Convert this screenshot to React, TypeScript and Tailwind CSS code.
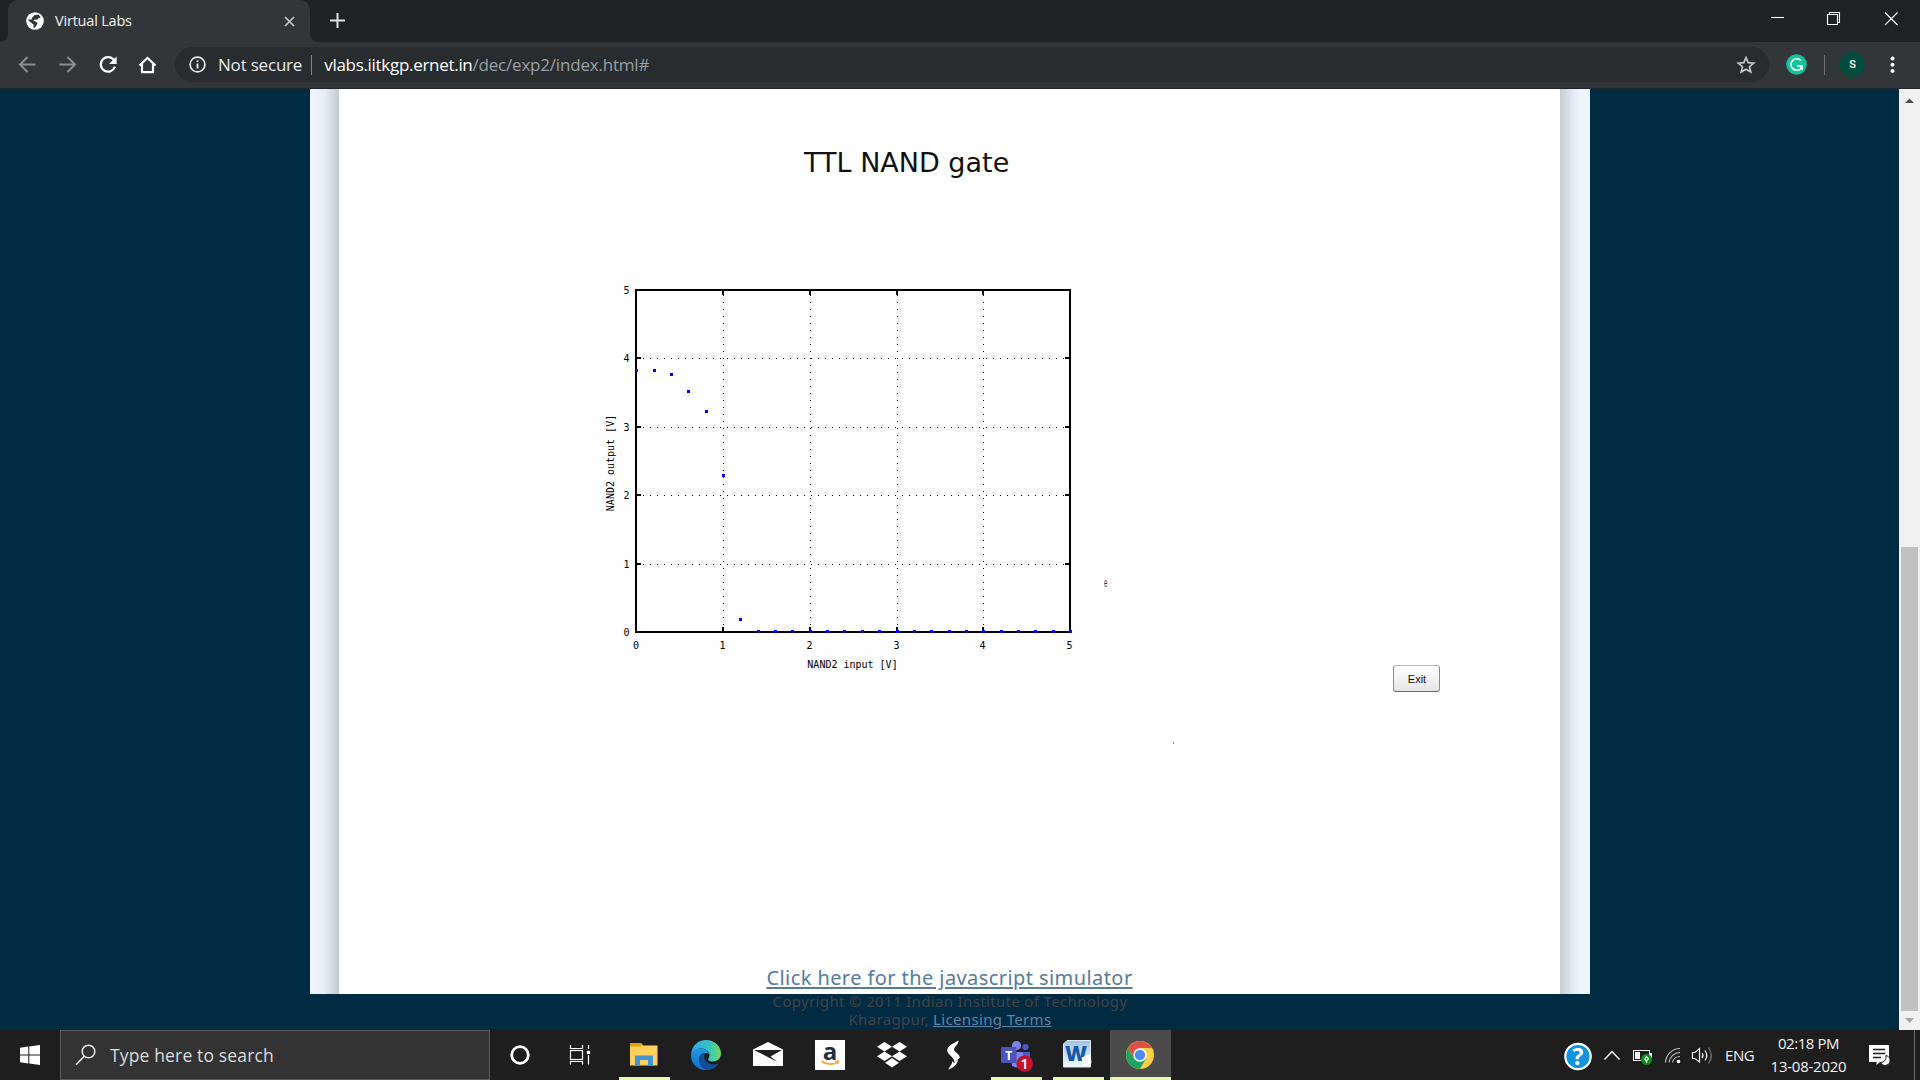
import React from "react";

const ui = "font-['Open_Sans','Noto_Sans',sans-serif]";

const gridX = [723, 810, 897, 983];
const gridY = [358, 427, 495, 564];
const points: [number, number][] = [
  [636, 370], [654, 370], [671, 374], [688, 391], [706, 411], [723, 475], [740, 619],
  [758, 631], [775, 631], [792, 631], [810, 631], [827, 631], [844, 631], [862, 631],
  [879, 631], [897, 631], [914, 631], [931, 631], [949, 631], [966, 631], [983, 631],
  [1001, 631], [1018, 631], [1035, 631], [1053, 631], [1070, 631],
];
const yLabels: [string, number][] = [["5", 294], ["4", 362], ["3", 431], ["2", 499], ["1", 568], ["0", 636]];
const xLabels: [string, number][] = [["0", 636], ["1", 722.5], ["2", 809.5], ["3", 896.5], ["4", 982.5], ["5", 1069.5]];

function Chart() {
  return (
    <svg className="shrink-0 bg-[#fefefe] font-['DejaVu_Sans_Mono',monospace]" width="514" height="404" viewBox="590 272 514 404" shapeRendering="crispEdges">
      {gridX.map((x) => (
        <g key={x}>
          <line x1={x + 0.5} x2={x + 0.5} y1="295" y2="631" stroke="#000" strokeDasharray="1 6" />
          <rect x={x - 1} y="291" width="2" height="4" />
          <rect x={x - 1} y="627" width="2" height="5" />
        </g>
      ))}
      {gridY.map((y) => (
        <g key={y}>
          <line x1="643" x2="1068" y1={y + 0.5} y2={y + 0.5} stroke="#000" strokeDasharray="1 6" />
          <rect x="637" y={y - 1} width="4" height="2" />
          <rect x="1065" y={y - 1} width="5" height="2" />
        </g>
      ))}
      <rect x="636" y="290" width="434" height="342" fill="none" stroke="#000" strokeWidth="2" />
      {points.map(([x, y]) => (
        <rect key={x} x={x - 1} y={y - 1} width="3" height="3" fill="#0000ff" />
      ))}
      <g fontSize="10" textAnchor="middle" shapeRendering="auto">
        {yLabels.map(([t, y]) => (
          <text key={t} x="626.5" y={y}>{t}</text>
        ))}
        {xLabels.map(([t, x]) => (
          <text key={t} x={x} y="649">{t}</text>
        ))}
        <text x="852.5" y="668">NAND2 input [V]</text>
        <text transform="translate(614 463) rotate(-90)">NAND2 output [V]</text>
      </g>
    </svg>
  );
}

function TabStrip() {
  return (
    <div className="flex h-[42px] items-end bg-[#202124]">
      <div className="flex w-2 items-end self-stretch bg-[#323639]">
        <div className="h-full w-2 rounded-br-lg bg-[#202124]" />
      </div>
      <div className="flex h-[42px] w-[302px] items-center bg-[#202124]">
        <div className="flex h-[42px] w-[302px] items-center rounded-t-[10px] bg-[#323639] pl-[18px]">
          <svg width="18" height="18" viewBox="0 0 18 18">
            <circle cx="9" cy="9" r="8.8" fill="#fff" />
            <path d="M8.2 3.2 12.6 2.6 14.8 5.4 12.4 6.2 11.2 7.8 8.6 7.6 7.4 9 9.6 9.6 11.6 11 10.4 13.4 8.8 15.8 7.4 15.6 7.6 12.8 5.6 11 2.4 8.6 2.6 7.2 5.4 7.8 6.2 5.4Z" fill="#323639" />
            <path d="M12.6 8.6 15.8 7.8 15.4 11.2 13.4 11.4Z" fill="#fff" />
          </svg>
          <span className="ml-[11px] text-[14.5px] leading-5 tracking-[-0.2px] text-[#f1f3f4]">Virtual Labs</span>
          <svg className="ml-auto mr-[15px]" width="11" height="11" viewBox="0 0 11 11">
            <path d="M1 1 10 10M10 1 1 10" stroke="#c4c7c9" strokeWidth="1.7" />
          </svg>
        </div>
      </div>
      <div className="flex w-2 self-stretch bg-[#323639]">
        <div className="h-full w-2 rounded-bl-lg bg-[#202124]" />
      </div>
      <svg className="mb-[14px] ml-[12px]" width="15" height="15" viewBox="0 0 15 15">
        <path d="M7.5 0V15M0 7.5H15" stroke="#dee1e6" strokeWidth="2" />
      </svg>
      <svg className="ml-auto self-start" width="160" height="40" viewBox="1760 0 160 40" fill="none" stroke="#fff" strokeWidth="1.1">
        <path d="M1771 17.5H1784" />
        <path d="M1827.5 14.5H1837.5V24.5H1827.5ZM1829.5 14V12.5H1839.5V22.5H1838" />
        <path d="M1885 12.5 1897.5 25M1897.5 12.5 1885 25" />
      </svg>
    </div>
  );
}

function Toolbar() {
  return (
    <div className="flex h-[47px] items-start border-b border-[#232628] bg-[#323639] pt-[5px]">
      <svg width="175" height="35" viewBox="0 47 175 35" fill="none" strokeWidth="2">
        <path d="M35.500 64.500H20.500M27.500 57 20 64.500 27.500 72" stroke="#8b8e91" />
        <path d="M59.500 64.500H74.500M67.500 57 75 64.500 67.500 72" stroke="#8b8e91" />
        <path d="M114.300 60.500A7.300 7.300 0 1 0 115 66.700" stroke="#fff" strokeWidth="2.200" />
        <path d="M116.600 56.500V64H109Z" fill="#fff" />
        <path d="M139.500 65.500 147.500 58 155.500 65.500M142 64V72.200H153V64" stroke="#fff" strokeWidth="2.200" />
      </svg>
      <div className="flex h-[35px] w-[1594px] items-center rounded-full bg-[#282c2f] pl-[14px] pr-[13px]">
        <svg width="17" height="17" viewBox="0 0 17 17" fill="none" stroke="#e8eaed">
          <circle cx="8.500" cy="8.500" r="7.400" strokeWidth="1.700" />
          <path d="M8.500 7.500V12.500M8.500 4.300V6" strokeWidth="1.900" />
        </svg>
        <span className="ml-[12px] text-[17px] leading-6 tracking-[-0.2px] text-[#e8eaed]">Not secure</span>
        <div className="ml-[9px] h-[20px] w-px bg-[#80868b]" />
        <span className="ml-[12px] text-[17px] leading-6 tracking-[-0.3px] text-white">vlabs.iitkgp.ernet.in</span>
        <span className="text-[17px] leading-6 tracking-[-0.2px] text-[#9aa0a6]">/dec/exp2/index.html#</span>
        <svg className="ml-auto" width="20" height="20" viewBox="0 0 20 20">
          <path d="M10 2.600 12.200 7.600 17.700 8.100 13.500 11.700 14.800 17 10 14.200 5.200 17 6.500 11.700 2.300 8.100 7.800 7.600Z" fill="none" stroke="#c4c7c9" strokeWidth="1.700" />
        </svg>
      </div>
      <svg width="151" height="35" viewBox="1769 47 151 35">
        <circle cx="1796.500" cy="64.500" r="10.300" fill="#15c39a" />
        <path d="M1801 60.500A5.800 5.800 0 1 0 1801 68.500L1801.500 66M1797 66H1802V70" fill="none" stroke="#fff" strokeWidth="1.500" />
        <rect x="1824" y="55" width="1" height="20" fill="#6b6f73" />
        <circle cx="1852.500" cy="64.500" r="12.500" fill="#004d40" />
        <text x="1852.500" y="68.300" textAnchor="middle" fontSize="11" fontWeight="500" fill="#fff" fontFamily="Roboto, sans-serif">S</text>
        <circle cx="1892.500" cy="58.500" r="2" fill="#fff" />
        <circle cx="1892.500" cy="64.800" r="2" fill="#fff" />
        <circle cx="1892.500" cy="71" r="2" fill="#fff" />
      </svg>
    </div>
  );
}

function Page() {
  return (
    <div className="flex h-[941px] bg-[#012a43] font-['Noto_Sans',sans-serif]">
      <div className="ml-[310px] flex w-[1280px] flex-col">
        <div className="flex h-[905px]">
          <div className="w-[29px] bg-linear-to-r from-[#eff6ff] from-0% via-[#e6eef6] via-50% to-[#c2cad0] to-100%" />
          <div className="flex w-[1221px] flex-col bg-white pt-[58px]">
            <h1 className="ml-[465px] self-start font-['DejaVu_Sans',sans-serif] text-[27px] leading-8 text-[#111]">TTL NAND gate</h1>
            <div className="mt-[93px] flex h-[420px] pl-[251px]">
              <Chart />
              <div className="mt-[305px] h-3 w-[3px] font-['Liberation_Sans',sans-serif] text-[12px] leading-3 text-[#333]">
                <span className="inline-block origin-left scale-x-[.5]">e</span>
              </div>
              <button className="mt-[393px] ml-[286px] h-[27px] w-[47px] rounded-[3px] border border-[#8a8a8a] border-t-[#b5b5b5] border-b-[#666] bg-linear-to-b from-white to-[#e6e6e6] pt-px pl-px font-['Liberation_Sans',sans-serif] text-[11px] leading-none text-[#111]">Exit</button>
            </div>
            <div className="mt-[50px] ml-[834px] h-[2px] w-px bg-[#888]" />
            <a className="mt-auto self-center pb-px text-[20px] leading-[30px] tracking-[0.42px] text-[#587a9b] underline decoration-2 underline-offset-2">Click here for the javascript simulator</a>
          </div>
          <div className="w-[30px] bg-linear-to-r from-[#c3ced4] from-0% via-[#e4ebf6] via-45% to-[#ebf7ff] to-70%" />
        </div>
        <footer className="-mt-[2px] text-center text-[15px] leading-[18px] tracking-[0.35px] text-[#414345]">
          <p>Copyright © 2011 Indian Institute of Technology</p>
          <p>Kharagpur, <a className="text-[#6583a3] underline">Licensing Terms</a></p>
        </footer>
      </div>
      <div className="ml-auto flex w-[21px] flex-col items-center bg-[#f1f1f1]">
        <svg width="21" height="21" viewBox="0 0 21 21"><path d="M6 14 10.500 9.500 15 14Z" fill="#505050" /></svg>
        <div className="mt-[437px] h-[464px] w-[17px] bg-[#c1c1c1]" />
        <svg width="21" height="19" viewBox="0 0 21 19"><path d="M6 7 10.500 12 15 7Z" fill="#a3a3a3" /></svg>
      </div>
    </div>
  );
}

function TaskButton({ children, active, running }: { children: React.ReactNode; active?: boolean; running?: boolean }) {
  return (
    <svg width="62" height="50" viewBox="0 0 62 50">
      {active && <rect x="1" width="61" height="50" fill="#4b4b4b" />}
      {children}
      {running && <rect x={active ? 1 : 6} y="47" width={active ? 61 : 51} height="3" fill="#e5fbad" />}
    </svg>
  );
}

function Taskbar() {
  return (
    <div className={`flex h-[50px] bg-[#1e1e1e] text-[#f2f2f2] ${ui}`}>
      <svg width="60" height="50" viewBox="0 0 60 50" fill="#fff">
        <path d="M20 17.800 28.300 16.600V24.400H20ZM29.300 16.500 40 15V24.400H29.300ZM20 25.500H28.300V33.500L20 32.300ZM29.300 25.500H40V35L29.300 33.600Z" />
      </svg>
      <div className="flex w-[430px] items-center border border-[#5c5c5c] bg-[#333] pl-[14px]">
        <svg width="22" height="22" viewBox="0 0 22 22" fill="none" stroke="#eee" strokeWidth="1.500">
          <circle cx="13.500" cy="7.500" r="6.300" />
          <path d="M9.200 12.200 1 20.800" />
        </svg>
        <span className="ml-[13px] text-[17.5px] leading-6 tracking-[0.15px] text-[#dcdcdc]">Type here to search</span>
      </div>
      <svg width="60" height="50" viewBox="0 0 60 50">
        <circle cx="30" cy="25" r="8.300" fill="none" stroke="#fff" strokeWidth="2.800" />
      </svg>
      <svg width="63" height="50" viewBox="550 1030 63 50" fill="none" stroke="#fff" strokeWidth="1.200">
        <rect x="570.500" y="1050.500" width="12" height="9" />
        <path d="M570.500 1045V1048.500H582.500V1045M570.500 1064.500V1061.500H582.500V1064.500M588.500 1045V1049M588.500 1055V1064.500" />
        <rect x="587.500" y="1051.500" width="2" height="2" fill="#fff" />
      </svg>
      <TaskButton running>
        <path d="M17 13H28L30 15.500H44.500V35.500H17Z" fill="#ffd05c" />
        <path d="M17 13H28L29.500 14.500 27.500 16.500H17Z" fill="#e2a10d" />
        <path d="M22 25.500H40V36H35V30H27V36H22Z" fill="#3f97d8" />
      </TaskButton>
      <TaskButton>
        <defs>
          <linearGradient id="eg" x1="0" x2="1"><stop offset="0" stopColor="#2aa9e8" /><stop offset=".6" stopColor="#38c3c9" /><stop offset="1" stopColor="#6fdc55" /></linearGradient>
          <linearGradient id="eb" x1="0" y1="0" x2="0" y2="1"><stop offset="0" stopColor="#2597dd" /><stop offset="1" stopColor="#0f6fd0" /></linearGradient>
        </defs>
        <path d="M16.200 24C17 15 23.500 10 31 10 40 10 46 16.500 46 23.500 46 28.500 42 31.500 38 31.500 34 31.500 32.500 29.800 33.500 28.500 36.500 24 32.500 18.500 26 18.500 21.500 18.500 18 21 16.200 24Z" fill="url(#eg)" />
        <path d="M16 25.500C16.500 20.500 21 18.200 26 18.500 31 18.800 33.500 22 34 24 30 21.500 24.500 24 24 29 23.600 34.500 28 39 33 39.800 24 41.500 16 34.500 16 25.500Z" fill="url(#eb)" />
        <path d="M24 29C24.300 25.500 27 23 30 23 27.500 27.500 31 34.500 38.500 34.500 41 34.500 43 33.500 43.800 33 42 37 37 40.200 33 39.900 28 39 23.600 34.500 24 29Z" fill="#124e9c" />
      </TaskButton>
      <TaskButton>
        <path d="M16 19.500 31 12 46 19.500V36H16Z" fill="#fff" />
        <path d="M17 20H45L33.500 26.500 40.500 32Z" fill="#1e1e1e" />
      </TaskButton>
      <TaskButton>
        <rect x="16" y="10" width="30" height="30" fill="#fff" />
        <text x="31" y="29.500" textAnchor="middle" fontSize="24" fontWeight="700" fill="#232f3e">a</text>
        <path d="M22.500 31C27 34.800 34 35.200 38.500 32.200" fill="none" stroke="#f9a83a" strokeWidth="1.700" />
        <path d="M36 31.500 39.500 31 38.500 34.500" fill="none" stroke="#f9a83a" strokeWidth="1.300" />
      </TaskButton>
      <TaskButton>
        <path d="M23.500 12 31 16.700 23.500 21.400 16 16.700ZM38.500 12 46 16.700 38.500 21.400 31 16.700ZM23.500 21.600 31 26.300 23.500 31 16 26.300ZM38.500 21.600 46 26.300 38.500 31 31 26.300ZM31 28 38 32.700 31 37.400 24 32.700Z" fill="#fff" />
      </TaskButton>
      <TaskButton>
        <path d="M35.500 10.500C28 14.500 24.300 16.500 24.200 20.500 24.300 23.500 28 25.500 30.500 29L31.500 32.500 37 27.500C36.500 24.500 31.500 22 31 19.500 31 16.500 35.500 15 35.500 10.500Z" fill="#fff" />
        <path d="M35 29.500 31 33 29 31C30 34 26 36.500 25.500 39.800 30 37.500 34.500 35 35 29.500Z" fill="#fff" />
      </TaskButton>
      <TaskButton running>
        <circle cx="31.500" cy="15.500" r="4.600" fill="#7b83eb" />
        <circle cx="40.500" cy="17" r="3.100" fill="#5059c9" />
        <path d="M36 22H45V30Q44 34 40 34H36Z" fill="#5059c9" />
        <path d="M25 22H38V36Q33 39 27 36Z" fill="#7b83eb" />
        <rect x="16" y="17" width="15.500" height="16" rx="1" fill="#4b53bc" />
        <text x="23.700" y="29.500" textAnchor="middle" fontSize="12" fontWeight="700" fill="#fff">T</text>
        <circle cx="39.700" cy="33.700" r="8.300" fill="#c4122f" />
        <text x="39.500" y="39" textAnchor="middle" fontSize="15" fontWeight="600" fill="#fff">1</text>
      </TaskButton>
      <TaskButton running>
        <defs><linearGradient id="wg" x1="0" y1="0" x2="0" y2="1"><stop offset="0" stopColor="#9dc3ea" /><stop offset="1" stopColor="#f2f8fe" /></linearGradient></defs>
        <path d="M20 10.500H43.500V37H16.500V14Z" fill="url(#wg)" stroke="#dfeaf6" />
        <text x="29" y="30.500" textAnchor="middle" fontSize="21" fontWeight="800" fill="#1458a8" textLength="22" lengthAdjust="spacingAndGlyphs">W</text>
        <path d="M34.500 27.500 43.500 24 44.500 33 36.500 36.500Z" fill="#fff" />
      </TaskButton>
      <TaskButton running active>
        <circle cx="31" cy="25" r="14" fill="#ffcd46" />
        <path d="M18.880 18A14 14 0 0 1 43.120 18H31L24.940 28.500Z" fill="#dd5144" />
        <path d="M18.880 18A14 14 0 0 0 31 39L37.060 28.500 31 25 24.940 28.500Z" fill="#1da462" />
        <circle cx="31" cy="25" r="6.700" fill="#fff" />
        <circle cx="31" cy="25" r="5.200" fill="#4c8bf5" />
      </TaskButton>
      <div className="ml-auto flex items-center">
        <svg width="156" height="50" viewBox="1562 1030 156 50" fill="none" stroke="#f2f2f2">
          <circle cx="1578" cy="1056.500" r="12.700" fill="#0f95dc" stroke="#fff" strokeWidth="2.200" />
          <text x="1578" y="1065" textAnchor="middle" fontSize="23" fontWeight="700" fill="#fff" stroke="none">?</text>
          <path d="M1604.500 1059.500 1612 1051.500 1619.500 1059.500" strokeWidth="1.500" />
          <rect x="1633.500" y="1050.500" width="16" height="10" />
          <rect x="1635" y="1052" width="5" height="7" fill="#fff" stroke="none" />
          <rect x="1650" y="1053" width="2" height="5" fill="#fff" stroke="none" />
          <circle cx="1646.500" cy="1059.500" r="5.500" fill="#0f8a1f" stroke="none" />
          <path d="M1646.500 1063V1060M1646.500 1056.500 1644.500 1059 1646.500 1061 1648.500 1059Z" strokeWidth="1.200" />
          <path d="M1665.500 1062.500A14.500 14.500 0 0 1 1680 1048.500M1669 1062.500A11 11 0 0 1 1680 1052.500M1672.500 1062.500A7.500 7.500 0 0 1 1680 1056.500" strokeWidth="1.200" stroke="#bdbdbd" />
          <circle cx="1678.500" cy="1061.500" r="1.800" fill="#fff" stroke="none" />
          <path d="M1692.500 1052.500H1695L1699.500 1048.500V1062L1695 1058.500H1692.500Z" strokeWidth="1.200" />
          <path d="M1702 1053Q1704 1055.500 1702 1058M1705 1050.500Q1708.500 1055.500 1705 1060.500" strokeWidth="1.200" />
          <path d="M1708.500 1047.500Q1714 1055.500 1708.500 1063.500" stroke="#7c7c7c" strokeWidth="1.200" />
        </svg>
        <span className="w-[44px] pl-[7px] text-[15px] leading-5 tracking-[-0.4px]">ENG</span>
        <div className="flex w-[93px] flex-col items-center text-[15px] leading-[23px]">
          <span className="tracking-[-0.45px]">02:18 PM</span>
          <span className="tracking-[-0.25px]">13-08-2020</span>
        </div>
        <svg width="65" height="50" viewBox="1855 1030 65 50">
          <path d="M1869 1045H1889V1062H1880L1876.500 1065V1062H1869Z" fill="#fff" />
          <path d="M1873 1049.500H1885M1873 1053.500H1885M1873 1057.500H1881" stroke="#1e1e1e" strokeWidth="1.300" />
          <path d="M1886 1055.500A5 5 0 1 1 1880.500 1062.500Q1886.500 1062 1886 1055.500Z" fill="#fff" stroke="#1e1e1e" />
          <rect x="1914" y="1030" width="1" height="50" fill="#6a6a6a" />
        </svg>
      </div>
    </div>
  );
}

export default function App() {
  return (
    <div className="h-[1080px] w-[1920px] overflow-hidden">
      <header className={ui}>
        <TabStrip />
        <Toolbar />
      </header>
      <Page />
      <Taskbar />
    </div>
  );
}
